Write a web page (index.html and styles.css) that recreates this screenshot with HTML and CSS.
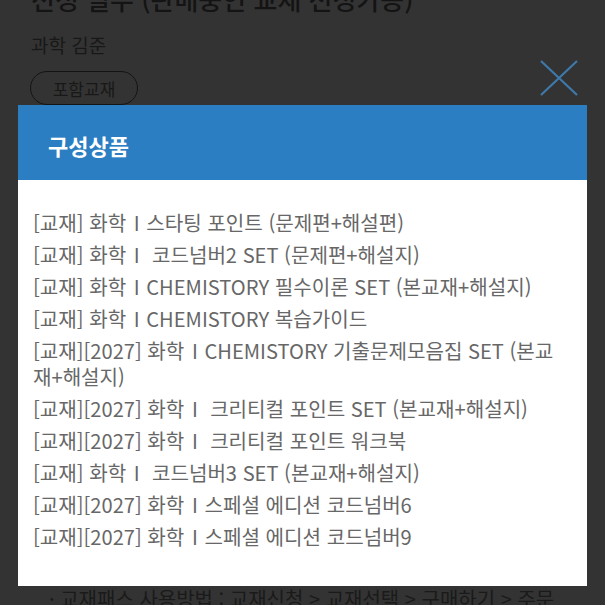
FILE: index.html
```html
<!DOCTYPE html>
<html lang="ko">
<head>
<meta charset="utf-8">
<title>구성상품</title>
<link rel="stylesheet" href="styles.css">
</head>
<body>
<div class="page">
  <h1 class="title">선정 필수 (판매중인 교재 선정가능)</h1>
  <p class="author">과학 김준</p>
  <span class="pill">포함교재</span>
  <div class="behind"></div>
  <p class="guide">· 교재패스 사용방법 : 교재신청 &gt; 교재선택 &gt; 구매하기 &gt; 주문</p>
</div>

<button class="close" aria-label="닫기">
  <svg width="38" height="36" viewBox="0 0 38 36"><path d="M1 1 L37 35 M37 1 L1 35" stroke="#3e79aa" stroke-width="2.2" fill="none"/></svg>
</button>

<section class="modal">
  <header class="modal-head">구성상품</header>
  <ul class="items">
    <li>[교재] 화학 <span class="rn">I</span> 스타팅 포인트 (문제편+해설편)</li>
    <li>[교재] 화학 <span class="rn">I</span> &nbsp;코드넘버2 SET (문제편+해설지)</li>
    <li>[교재] 화학 <span class="rn">I</span> CHEMISTORY 필수이론 SET (본교재+해설지)</li>
    <li>[교재] 화학 <span class="rn">I</span> CHEMISTORY 복습가이드</li>
    <li>[교재][2027] 화학 <span class="rn">I</span> CHEMISTORY 기출문제모음집 SET (본교재+해설지)</li>
    <li>[교재][2027] 화학 <span class="rn">I</span> &nbsp;크리티컬 포인트 SET (본교재+해설지)</li>
    <li>[교재][2027] 화학 <span class="rn">I</span> &nbsp;크리티컬 포인트 워크북</li>
    <li>[교재] 화학 <span class="rn">I</span> &nbsp;코드넘버3 SET (본교재+해설지)</li>
    <li>[교재][2027] 화학 <span class="rn">I</span> 스페셜 에디션 코드넘버6</li>
    <li>[교재][2027] 화학 <span class="rn">I</span> 스페셜 에디션 코드넘버9</li>
  </ul>
</section>
</body>
</html>
```

FILE: styles.css
```css
html, body {
  margin: 0;
  padding: 0;
  background: #333333;
  height: 100%;
  overflow: hidden;
}
body {
  font-family: "Noto Sans CJK KR", "Noto Sans", sans-serif;
  color: #161616;
}
.page {
  padding: 0 31px;
}
.title {
  margin: -18px 0 0;
  font-size: 26px;
  line-height: 34px;
  font-weight: 500;
  color: #141414;
  white-space: nowrap;
}
.author {
  margin: 17px 0 0;
  font-size: 19px;
  line-height: 24px;
  color: #181818;
}
.pill {
  display: flex;
  align-items: center;
  justify-content: center;
  box-sizing: border-box;
  margin-top: 14px;
  margin-left: -1px;
  width: 108px;
  height: 34px;
  border: 1px solid #141414;
  border-radius: 17px;
  font-size: 17px;
  color: #181818;
}
.behind {
  height: 481px;
}
.guide {
  margin: 0;
  padding-left: 18px;
  font-size: 20px;
  line-height: 26px;
  color: #1a1a1a;
  white-space: nowrap;
}
.close {
  position: fixed;
  left: 540px;
  top: 60px;
  margin: 0;
  padding: 0;
  border: 0;
  background: transparent;
  line-height: 0;
}
.modal {
  position: fixed;
  left: 18px;
  top: 105px;
  width: 569px;
  background: #ffffff;
}
.modal-head {
  box-sizing: border-box;
  height: 75px;
  padding-left: 30px;
  padding-top: 4px;
  display: flex;
  align-items: center;
  background: #2b7ec2;
  color: #ffffff;
  font-size: 22px;
  font-weight: 700;
}
.items {
  list-style: none;
  margin: 0;
  padding: 30px 22px 36px 15px;
  display: flex;
  flex-direction: column;
  gap: 6px;
}
.items li {
  font-size: 20.1px;
  line-height: 26px;
  color: #676767;
}
.rn {
  margin: 0 1px 0 2px;
}
```
